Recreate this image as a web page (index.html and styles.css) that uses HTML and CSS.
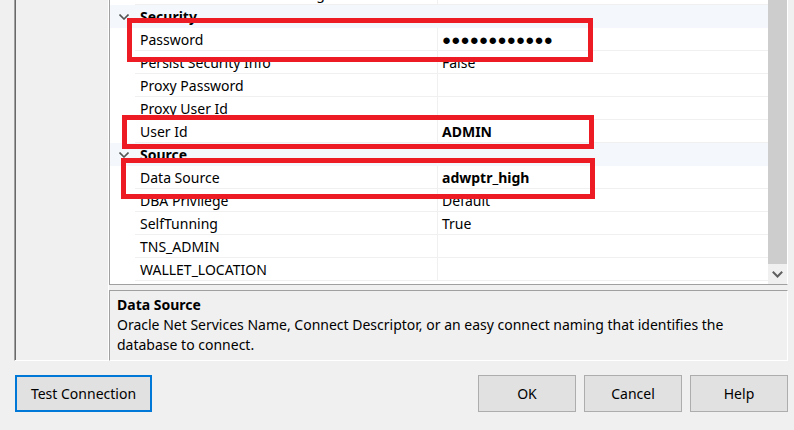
FILE: index.html
```html
<!DOCTYPE html>
<html>
<head>
<meta charset="utf-8">
<link rel="stylesheet" href="styles.css">
</head>
<body>
<div class="dialog">
  <div class="top">
    <div class="left-panel"></div>
    <div class="right">
      <div class="grid">
        <div class="rows">
          <div class="rows-inner">
            <div class="row partial"><div class="gut"></div><div class="name">Validate Connection Pooling</div><div class="val"></div></div>
            <div class="row cat"><div class="gut"><svg width="10" height="6" viewBox="0 0 10 6"><polyline points="0.5,0.5 5,5 9.5,0.5" fill="none" stroke="#555" stroke-width="1.6"/></svg></div><div class="cname">Security</div></div>
            <div class="row"><div class="gut"></div><div class="name">Password</div><div class="val bold dots">●●●●●●●●●●●●</div></div>
            <div class="row"><div class="gut"></div><div class="name">Persist Security Info</div><div class="val">False</div></div>
            <div class="row"><div class="gut"></div><div class="name">Proxy Password</div><div class="val"></div></div>
            <div class="row"><div class="gut"></div><div class="name">Proxy User Id</div><div class="val"></div></div>
            <div class="row"><div class="gut"></div><div class="name">User Id</div><div class="val bold">ADMIN</div></div>
            <div class="row cat"><div class="gut"><svg width="10" height="6" viewBox="0 0 10 6"><polyline points="0.5,0.5 5,5 9.5,0.5" fill="none" stroke="#555" stroke-width="1.6"/></svg></div><div class="cname">Source</div></div>
            <div class="row"><div class="gut"></div><div class="name">Data Source</div><div class="val bold">adwptr_high</div></div>
            <div class="row"><div class="gut"></div><div class="name">DBA Privilege</div><div class="val">Default</div></div>
            <div class="row"><div class="gut"></div><div class="name">SelfTunning</div><div class="val">True</div></div>
            <div class="row"><div class="gut"></div><div class="name">TNS_ADMIN</div><div class="val"></div></div>
            <div class="row"><div class="gut"></div><div class="name">WALLET_LOCATION</div><div class="val"></div></div>
          </div>
          <div class="redbox box1"></div>
          <div class="redbox box2"></div>
          <div class="redbox box3"></div>
        </div>
        <div class="scrollbar">
          <div class="thumb"></div>
          <div class="arrow"><svg width="11" height="7" viewBox="0 0 11 7"><polyline points="0.8,0.8 5.5,5.5 10.2,0.8" fill="none" stroke="#606060" stroke-width="2"/></svg></div>
        </div>
      </div>
      <div class="desc">
        <div class="desc-title">Data Source</div>
        <div class="desc-text">Oracle Net Services Name, Connect Descriptor, or an easy connect naming that identifies the database to connect.</div>
      </div>
    </div>
  </div>
  <div class="buttons">
    <button class="btn btn-test">Test Connection</button>
    <div class="spacer"></div>
    <button class="btn">OK</button>
    <button class="btn">Cancel</button>
    <button class="btn">Help</button>
  </div>
</div>
</body>
</html>
```
FILE: styles.css
```css
html, body {
  margin: 0;
  padding: 0;
}
body {
  width: 794px;
  height: 430px;
  overflow: hidden;
  background: #f0f0f0;
  font-family: "Noto Sans", "Open Sans", sans-serif;
  font-size: 14px;
  color: #000;
}
.dialog {
  padding: 0 6px 0 14px;
}
.top {
  display: flex;
  height: 361px;
}
.left-panel {
  box-sizing: border-box;
  width: 95px;
  border-left: 1px solid #a0a0a0;
  border-right: 1px solid #fff;
  border-bottom: 1px solid #fff;
  box-shadow: inset 1px 0 0 #696969;
}
.right {
  width: 679px;
  display: flex;
  flex-direction: column;
}
.grid {
  box-sizing: border-box;
  height: 285px;
  display: flex;
  background: #fff;
  border-left: 1px solid #a0a0a0;
  border-right: 1px solid #fff;
  border-bottom: 1px solid #a0a0a0;
}
.rows {
  flex: 1;
  position: relative;
  overflow: hidden;
}
.rows-inner {
  margin-top: -18px;
}
.row {
  display: grid;
  grid-template-columns: 25px 303px 1fr;
  height: 23px;
}
.gut {
  display: flex;
  align-items: center;
  justify-content: center;
  padding-left: 2px;
}
.name, .val {
  box-sizing: border-box;
  height: 23px;
  line-height: 23px;
  border-bottom: 1px solid #f0f0f0;
  white-space: nowrap;
  overflow: hidden;
}
.name {
  padding-left: 5px;
  border-right: 1px solid #f0f0f0;
}
.val {
  padding-left: 4px;
}
.bold {
  font-weight: bold;
}
.dots {
  font-size: 15px;
  letter-spacing: 0.2px;
}
.row.cat {
  grid-template-columns: 25px 1fr;
  background: #f4f7fb;
}
.cname {
  padding-left: 5px;
  line-height: 23px;
  font-weight: bold;
}
.redbox {
  position: absolute;
  box-sizing: border-box;
  border: 5px solid #ed1c24;
}
.box1 { left: 17px; top: 18px; width: 466px; height: 44px; }
.box2 { left: 12px; top: 115px; width: 472px; height: 34px; }
.box3 { left: 11px; top: 158px; width: 474px; height: 41px; }
.scrollbar {
  width: 19px;
  display: flex;
  flex-direction: column;
  background: #f0f0f0;
}
.thumb {
  flex: 1;
  background: #cdcdcd;
}
.arrow {
  height: 20px;
  display: flex;
  align-items: center;
  justify-content: center;
}
.desc {
  box-sizing: border-box;
  margin-top: 5px;
  height: 71px;
  border-top: 1px solid #a0a0a0;
  border-left: 1px solid #a0a0a0;
  border-right: 1px solid #fff;
  border-bottom: 1px solid #fff;
  padding: 4px 8px 0 7px;
  line-height: 20px;
}
.desc-title {
  font-weight: bold;
}
.buttons {
  display: flex;
  gap: 8px;
  margin-top: 14px;
  padding-left: 1px;
}
.spacer {
  flex: 1;
}
.btn {
  box-sizing: border-box;
  width: 98px;
  height: 37px;
  background: #e1e1e1;
  border: 1px solid #adadad;
  font-family: "Noto Sans", "Open Sans", sans-serif;
  font-size: 14px;
  color: #000;
  padding: 0;
}
.btn-test {
  width: 137px;
  border: 2px solid #0078d7;
}
```
